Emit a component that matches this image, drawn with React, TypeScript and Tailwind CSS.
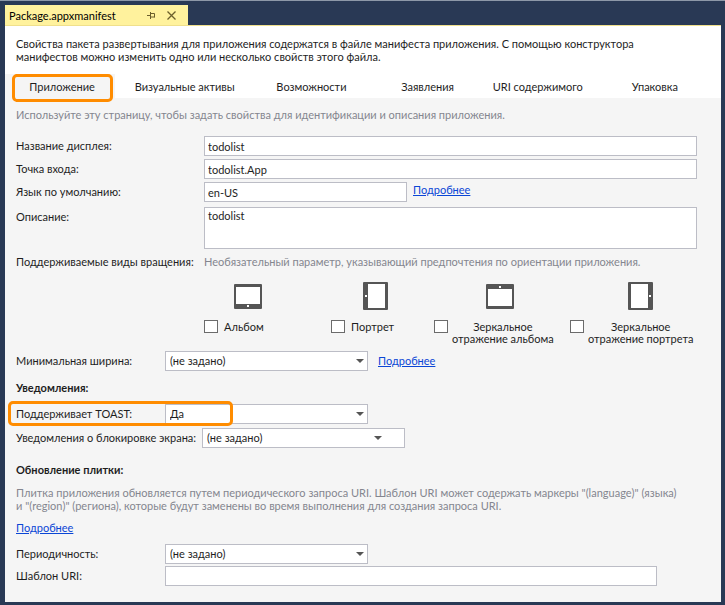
import type { ReactNode } from "react";

const field = "border border-[#bcbdc6] bg-white text-[#1e1e1e] outline-none";

function TextField({ id, value, className }: { id: string; value: string; className: string }) {
  return <input id={id} type="text" defaultValue={value} className={`h-5 px-[3px] text-[11px] leading-4 ${field} ${className}`} />;
}

function SelectField({ id, options, arrow, className }: { id: string; options: string[]; arrow: string; className: string }) {
  return (
    <div className={`relative h-5 ${className}`}>
      <select id={id} className={`block h-5 w-full appearance-none px-1 text-[11px] leading-4 ${field}`}>
        {options.map((o) => (
          <option key={o}>{o}</option>
        ))}
      </select>
      <svg className={`pointer-events-none absolute top-2 ${arrow}`} width="8" height="4" viewBox="0 0 8 4" aria-hidden="true">
        <path d="M0 0H8L4 4Z" fill="#555" />
      </svg>
    </div>
  );
}

function Label({ htmlFor, className, children }: { htmlFor: string; className: string; children: ReactNode }) {
  return (
    <label htmlFor={htmlFor} className={`shrink-0 whitespace-nowrap leading-5 ${className}`}>
      {children}
    </label>
  );
}

function MoreLink({ className = "" }: { className?: string }) {
  return (
    <a href="#more" className={`text-[#0a46d6] underline underline-offset-1 ${className}`}>
      Подробнее
    </a>
  );
}

function Landscape({ flipped = false }: { flipped?: boolean }) {
  return (
    <svg width="28" height="25" viewBox="0 0 28 25" aria-hidden="true">
      <rect width="28" height="25" rx="1" fill="#555" />
      <rect x="2" y={flipped ? 5 : 3} width="24" height="17" fill="#fff" />
      <rect x="13" y={flipped ? 2 : 21} width="2" height="2" fill="#fff" />
    </svg>
  );
}

function Portrait({ flipped = false }: { flipped?: boolean }) {
  return (
    <svg width="25" height="28" viewBox="0 0 25 28" aria-hidden="true">
      <rect width="25" height="28" rx="1" fill="#555" />
      <rect x={flipped ? 3 : 5} y="2" width="17" height="24" fill="#fff" />
      <rect x={flipped ? 21 : 2} y="13" width="2" height="2" fill="#fff" />
    </svg>
  );
}

function Rotation({ id, icon, className, gap, children }: { id: string; icon: ReactNode; className: string; gap: string; children: ReactNode }) {
  return (
    <div className={`shrink-0 ${className}`}>
      <div className="flex h-[30px] w-[88px] items-center justify-center">{icon}</div>
      <div className={`mt-[9px] flex items-start ${gap}`}>
        <input id={id} type="checkbox" className="h-[13px] w-[14px] shrink-0 appearance-none border border-[#6b6b6b] bg-white checked:bg-[#555]" />
        <label htmlFor={id} className="whitespace-nowrap text-center leading-[12px] pt-px">
          {children}
        </label>
      </div>
    </div>
  );
}

const tabs = ["Приложение", "Визуальные активы", "Возможности", "Заявления", "URI содержимого", "Упаковка"];

export default function App() {
  return (
    <div className="border-t border-[#8d98a8] bg-[#293955] pb-[3px] pl-[5px] pr-1 pt-1 font-[Lato,'Noto_Sans',sans-serif] text-[11px] leading-[13px] text-[#1e1e1e]">
      <div className="flex">
        <div className="flex h-5 w-[183px] items-center bg-[#fff29d] pl-1">
          <span className="flex-1 text-[11px] text-black">Package.appxmanifest</span>
          <button type="button" aria-label="Закрепить" className="mr-3">
            <svg width="8" height="8" viewBox="0 0 8 8" fill="none" stroke="#6b5f2c" aria-hidden="true">
              <path d="M0 4.5H3M3.5 1V8M3.5 2.5H7.5V6.5M3.5 6H7.5" />
            </svg>
          </button>
          <button type="button" aria-label="Закрыть" className="mr-3">
            <svg width="9" height="9" viewBox="0 0 9 9" fill="none" stroke="#6b5f2c" strokeWidth="1.3" aria-hidden="true">
              <path d="M0.5 0.5L8.5 8.5M8.5 0.5L0.5 8.5" />
            </svg>
          </button>
        </div>
      </div>

      <main className="border-t border-[#f0e08c] bg-[#f5f5f5]">
        <header className="bg-white">
          <p className="h-12 pl-[11px] pt-[11px]">
            Свойства пакета развертывания для приложения содержатся в файле манифеста приложения. С помощью конструктора
            <br />
            манифестов можно изменить одно или несколько свойств этого файла.
          </p>
          <nav className="grid h-6 grid-cols-[110fr_139fr_114fr_118fr_102fr_132fr]">
            {tabs.map((t, i) => (
              <div key={t} className={`relative flex items-center justify-center ${i === 0 ? "bg-[#f5f5f5] pl-1" : ""}`}>
                <button type="button" className="whitespace-nowrap">{t}</button>
                {i === 0 && <span className="pointer-events-none absolute -bottom-1 left-[7px] right-0.5 top-0 rounded-[5px] border-[3px] border-[#ff8c00]" />}
              </div>
            ))}
          </nav>
        </header>

        <form className="pb-4 pl-[11px] pr-6 pt-2" onSubmit={(e) => e.preventDefault()}>
          <p className="h-[30px] leading-[18px] text-[#84868f]">Используйте эту страницу, чтобы задать свойства для идентификации и описания приложения.</p>

          <div className="flex flex-col gap-[3px]">
            <div className="flex">
              <Label htmlFor="name" className="w-[188px]">Название дисплея:</Label>
              <TextField id="name" value="todolist" className="min-w-0 flex-1" />
            </div>
            <div className="flex">
              <Label htmlFor="entry" className="w-[188px]">Точка входа:</Label>
              <TextField id="entry" value="todolist.App" className="min-w-0 flex-1" />
            </div>
            <div className="flex">
              <Label htmlFor="lang" className="w-[188px]">Язык по умолчанию:</Label>
              <TextField id="lang" value="en-US" className="w-[203px]" />
              <MoreLink className="ml-1.5 leading-4" />
            </div>
            <div className="mt-0.5 flex">
              <Label htmlFor="desc" className="w-[188px]">Описание:</Label>
              <textarea id="desc" defaultValue="todolist" className={`block h-[42px] min-w-0 flex-1 resize-none px-[3px] text-[11px] leading-4 ${field}`} />
            </div>
          </div>

          <fieldset>
            <div className="mt-1 flex leading-[18px]">
              <span className="w-[188px] shrink-0 whitespace-nowrap">Поддерживаемые виды вращения:</span>
              <span className="text-[#84868f]">Необязательный параметр, указывающий предпочтения по ориентации приложения.</span>
            </div>
            <div className="ml-[188px] mt-2.5 flex h-[70px]">
              <Rotation id="r1" icon={<Landscape />} gap="gap-1.5" className="w-[127px]">Альбом</Rotation>
              <Rotation id="r2" icon={<Portrait />} gap="gap-1.5" className="w-[103px]">Портрет</Rotation>
              <Rotation id="r3" icon={<span className="ml-11"><Landscape flipped /></span>} gap="gap-1" className="w-[136px]">
                Зеркальное<br />отражение альбома
              </Rotation>
              <Rotation id="r4" icon={<span className="ml-[52px]"><Portrait flipped /></span>} gap="gap-1" className="w-[120px]">
                Зеркальное<br />отражение портрета
              </Rotation>
            </div>
          </fieldset>

          <div className="flex">
            <Label htmlFor="width" className="w-[149px]">Минимальная ширина:</Label>
            <SelectField id="width" options={["(не задано)"]} arrow="right-1" className="w-[203px]" />
            <MoreLink className="ml-2.5 leading-5" />
          </div>

          <h2 className="mt-2 font-bold leading-[18px]">Уведомления:</h2>
          <div className="relative mt-[7px] flex">
            <Label htmlFor="toast" className="w-[149px]">Поддерживает TOAST:</Label>
            <SelectField id="toast" options={["Да", "Нет"]} arrow="right-1" className="w-[203px]" />
            <span className="pointer-events-none absolute -bottom-0.5 -left-2 -top-[3px] w-[225px] rounded-[5px] border-[3px] border-[#ff8c00]" />
          </div>
          <div className="mt-1 flex">
            <Label htmlFor="lock" className="w-[186px]">Уведомления о блокировке экрана:</Label>
            <SelectField id="lock" options={["(не задано)"]} arrow="right-[23px]" className="w-[203px]" />
          </div>

          <h2 className="mt-[13px] font-bold leading-[18px]">Обновление плитки:</h2>
          <p className="mt-[7px] text-[#84868f]">
            Плитка приложения обновляется путем периодического запроса URI. Шаблон URI может содержать маркеры "(language)" (языка)
            <br />
            и "(region)" (региона), которые будут заменены во время выполнения для создания запроса URI.
          </p>
          <p className="mt-[7px] leading-[18px]"><MoreLink /></p>
          <div className="mt-[7px] flex">
            <Label htmlFor="period" className="w-[149px]">Периодичность:</Label>
            <SelectField id="period" options={["(не задано)"]} arrow="right-1" className="w-[203px]" />
          </div>
          <div className="mt-0.5 flex">
            <Label htmlFor="uri" className="w-[149px]">Шаблон URI:</Label>
            <TextField id="uri" value="" className="mr-10 min-w-0 flex-1" />
          </div>
        </form>
      </main>
    </div>
  );
}
